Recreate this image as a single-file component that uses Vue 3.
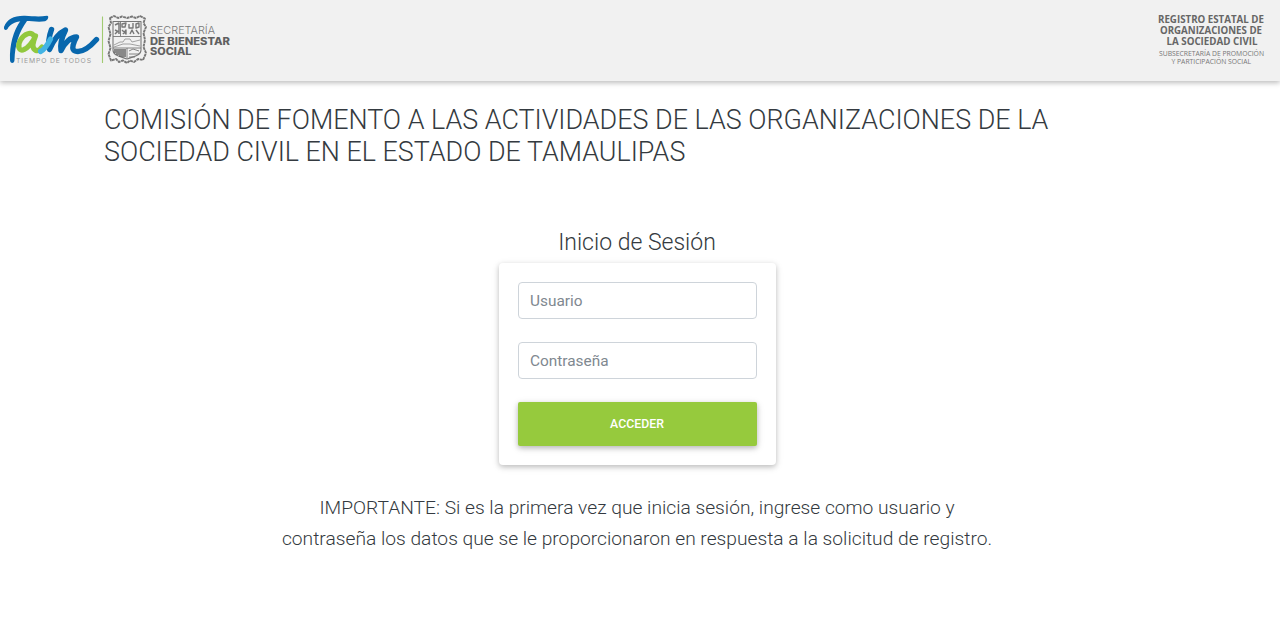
<script setup>
import { ref } from 'vue'

const user = ref('')
const password = ref('')
</script>

<template>
  <div class="page">
    <header class="bar">
      <svg class="brand" width="240" height="80" viewBox="0 0 240 80" role="img" aria-label="Tam">
        <path d="M4 27C7 19 14 15.500 25 15.800C33 16.200 39 17 47 15.800C49.500 16 48 20.500 45 21.300C37 22.500 29 20.500 22 21.300C14 22 10 24.500 7.500 29C5.500 31 3.500 29.500 4 27Z" fill="#0867ad" />
        <path d="M21 20L27 21C19 32 15 44 14.500 60C14.500 64 10 64 10 60C9.500 45 13 31 21 20Z" fill="#0867ad" />
        <g fill="none" stroke-linecap="round" stroke-linejoin="round">
          <path d="M34 36C31 31 24 34 20.500 40C17 46 19 52 24 49.500C28 48 33 42 35.500 36C32.500 43 31.500 48.500 36 50.500C38.500 51.500 40 49.500 42 47" stroke="#91c83e" stroke-width="5.200" />
          <path d="M51.500 29.500C49 36 48 43 49.500 49.500C53 41 59 33 65.500 30C62 37 60 44 61 50.500C64.500 43 70.500 37 76.500 37C74 41.500 70.500 49.500 75 51C81.500 53 89 48 96.500 39.500" stroke="#0867ad" stroke-width="5.400" />
          <path d="M40.500 51.500C45 49.500 48 44 50.500 39" stroke="#42b4e4" stroke-width="5.200" />
        </g>
        <text x="16" y="62.500" class="motto" textLength="75" lengthAdjust="spacing">TIEMPO DE TODOS</text>
        <path d="M102.500 16.500V63" stroke="#a1cb72" stroke-width="1.100" />

        <g fill="none" stroke="#777" stroke-width=".9" stroke-linejoin="round">
          <path d="M110 18L114 16L118 18L122 16.500L127 18L132 16.500L136 18L140 16L145 18.500L143.500 23L146 27L143.500 33L145 40L143.500 47L146 53L143 60L138 59L134 62L130 60.500L127 63L123 60.500L119 62L116 59L111 60.500L108.500 54L110.500 48L108.500 41L110.500 34L108.500 27L111 23Z" stroke-width="1.900" stroke-dasharray="3 .6" />
          <path d="M113 21.500H141V50C141 56 133 56.500 127 59C121 56.500 113 56 113 50Z" stroke-width="1.100" />
          <path d="M120.500 21.500V36M113 36.500H141M113 48H141M127 48V58" />
          <path d="M115 25L119 23V34M115 30L119 32M115 34L118 31" stroke-width="1.500" />
          <path d="M122 24L126 23L125 27H122ZM129 24V28H133V23M136 24L139 23V27L136 28ZM122 30L126 34V30L123 34M130 34L132 30L134 34M136 30L139 34" stroke-width="1.400" />
          <path d="M114 45L120 42H123L125 39H130L132 42L140 40M114 47L123 44H130L140 46" stroke="#999" />
          <path d="M114 50H126M114 52H126M116 54H126M119 56H126" stroke="#666" stroke-width="1.400" />
          <path d="M129 51L133 49L139 51M129 54H139M129 57H135" />
        </g>
        <text x="150" y="34.100" class="office-light" textLength="65" lengthAdjust="spacingAndGlyphs">SECRETARÍA</text>
        <text x="150" y="44.700" class="office-bold" textLength="80" lengthAdjust="spacingAndGlyphs">DE BIENESTAR</text>
        <text x="150" y="54.900" class="office-bold" textLength="41.500" lengthAdjust="spacingAndGlyphs">SOCIAL</text>
      </svg>
      <svg class="registry" width="120" height="80" viewBox="0 0 120 80">
        <text x="8" y="22.900" class="reg-bold" textLength="106" lengthAdjust="spacingAndGlyphs">REGISTRO ESTATAL DE</text>
        <text x="10" y="33.900" class="reg-bold" textLength="102" lengthAdjust="spacingAndGlyphs">ORGANIZACIONES DE</text>
        <text x="16.500" y="44.900" class="reg-bold" textLength="91" lengthAdjust="spacingAndGlyphs">LA SOCIEDAD CIVIL</text>
        <text x="9" y="55.600" class="reg-light" textLength="105" lengthAdjust="spacingAndGlyphs">SUBSECRETARÍA DE PROMOCIÓN</text>
        <text x="21.500" y="63.500" class="reg-light" textLength="79.500" lengthAdjust="spacingAndGlyphs">Y PARTICIPACIÓN SOCIAL</text>
      </svg>
    </header>

    <main>
      <h1>COMISIÓN DE FOMENTO A LAS ACTIVIDADES DE LAS ORGANIZACIONES DE LA<br>SOCIEDAD CIVIL EN EL ESTADO DE TAMAULIPAS</h1>
      <h2>Inicio de Sesión</h2>
      <form class="card" @submit.prevent>
        <input v-model="user" type="text" placeholder="Usuario" aria-label="Usuario">
        <input v-model="password" type="password" placeholder="Contraseña" aria-label="Contraseña">
        <button type="submit">ACCEDER</button>
      </form>
      <p>IMPORTANTE: Si es la primera vez que inicia sesión, ingrese como usuario y<br>contraseña los datos que se le proporcionaron en respuesta a la solicitud de registro.</p>
    </main>
  </div>
</template>

<style>
body {
  margin: 0;
  background: #fff;
}
</style>

<style scoped>
* {
  box-sizing: border-box;
}

.page {
  height: 642px;
  overflow: hidden;
  font-family: Roboto, sans-serif;
  font-weight: 300;
  color: #343a40;
}

.bar {
  display: flex;
  justify-content: space-between;
  height: 81px;
  padding-right: 10px;
  background: #f1f1f1;
  box-shadow: 0 2px 5px rgba(0, 0, 0, .26);
}

text {
  font-family: "Open Sans", sans-serif;
}

.motto {
  font-family: Inter, sans-serif;
  font-size: 6.8px;
  font-weight: 400;
  fill: #999;
}

.office-light,
.office-bold {
  font-family: Inter, sans-serif;
  font-size: 10.2px;
  font-weight: 400;
  fill: #777;
}

.office-light {
  font-weight: 300;
}

.office-bold {
  font-size: 9.8px;
  font-weight: 800;
  fill: #606060;
}

.reg-bold {
  font-size: 9.8px;
  font-weight: 700;
  fill: #666;
}

.reg-light {
  font-size: 6.3px;
  font-weight: 400;
  fill: #777;
}

main {
  display: flex;
  flex-direction: column;
  align-items: center;
  width: 1066px;
  margin-left: 104px;
  padding-top: 23px;
}

h1 {
  align-self: flex-start;
  margin: 0;
  font-size: 26.9px;
  font-weight: 300;
  line-height: 32px;
  white-space: nowrap;
}

h2 {
  margin: 61px 0 0;
  font-size: 23px;
  font-weight: 300;
  line-height: 28px;
}

.card {
  display: flex;
  flex-direction: column;
  width: 277px;
  height: 202px;
  margin-top: 6px;
  padding: 19px;
  border-radius: 4px;
  background: #fff;
  box-shadow: 0 2px 5px rgba(0, 0, 0, .18), 0 2px 9px rgba(0, 0, 0, .11);
}

input {
  width: 100%;
  height: 37px;
  margin: 0 0 23px;
  padding: 1px 11.5px 0;
  border: 1px solid #ced4da;
  border-radius: 4px;
  outline: 0;
  background: #fff;
  font: 400 15.4px Roboto, sans-serif;
  color: #495057;
}

input::placeholder {
  color: #808890;
  opacity: 1;
}

button {
  height: 44px;
  margin: 0;
  padding: 0;
  border: 0;
  border-radius: 2px;
  background: #96ca3d;
  box-shadow: 0 2px 5px rgba(0, 0, 0, .2), 0 2px 9px rgba(0, 0, 0, .12);
  font: 500 12.3px Roboto, sans-serif;
  color: #fff;
}

p {
  margin: 27px 0 0;
  font-size: 19.22px;
  line-height: 31px;
  text-align: center;
  white-space: nowrap;
}
</style>
